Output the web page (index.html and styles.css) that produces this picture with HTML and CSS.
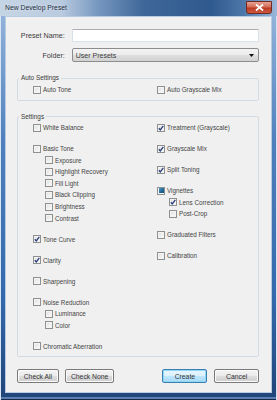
FILE: index.html
```html
<!DOCTYPE html>
<html lang="en">
<head>
  <meta charset="UTF-8" />
  <meta name="viewport" content="width=device-width, initial-scale=1.0" />
  <title>New Develop Preset</title>
  <link rel="stylesheet" href="styles.css">
</head>
<body>
  <div class="window">
    <!-- barra de titulo -->
    <div class="titlebar">
      <span class="title">New Develop Preset</span>
      <span class="close">
        <svg width="9" height="7" viewBox="0 0 9 7"><path d="M1 0.5 L8 6.5 M8 0.5 L1 6.5" stroke="#fff" stroke-width="1.8"/></svg>
      </span>
    </div>

    <div class="content">
      <div class="field-row">
        <label for="presetName">Preset Name:</label>
        <input type="text" id="presetName" />
      </div>
      <div class="field-row folder">
        <label>Folder:</label>
        <div class="select">
          <span>User Presets</span>
          <svg width="5" height="3" viewBox="0 0 5 3"><path d="M0 0 H5 L2.5 3 Z" fill="#111"/></svg>
        </div>
      </div>

      <fieldset class="group auto">
        <legend>Auto Settings</legend>
        <div class="cols">
          <div class="col">
            <div class="opt"><span class="box"></span>Auto Tone</div>
          </div>
          <div class="col">
            <div class="opt"><span class="box"></span>Auto Grayscale Mix</div>
          </div>
        </div>
      </fieldset>

      <fieldset class="group settings">
        <legend>Settings</legend>
        <div class="cols">
          <div class="col">
            <div class="opt"><span class="box"></span>White Balance</div>
            <div class="opt"><span class="box"></span>Basic Tone</div>
            <div class="opt sub"><span class="box"></span>Exposure</div>
            <div class="opt sub"><span class="box"></span>Highlight Recovery</div>
            <div class="opt sub"><span class="box"></span>Fill Light</div>
            <div class="opt sub"><span class="box"></span>Black Clipping</div>
            <div class="opt sub"><span class="box"></span>Brightness</div>
            <div class="opt sub"><span class="box"></span>Contrast</div>
            <div class="opt"><span class="box"><svg class="tick" viewBox="0 0 6 6"><path d="M0.8 3.2 L2.3 4.9 L5.3 0.8" fill="none" stroke="#2b3f7a" stroke-width="1.3"/></svg></span>Tone Curve</div>
            <div class="opt"><span class="box"><svg class="tick" viewBox="0 0 6 6"><path d="M0.8 3.2 L2.3 4.9 L5.3 0.8" fill="none" stroke="#2b3f7a" stroke-width="1.3"/></svg></span>Clarity</div>
            <div class="opt"><span class="box"></span>Sharpening</div>
            <div class="opt"><span class="box"></span>Noise Reduction</div>
            <div class="opt sub"><span class="box"></span>Luminance</div>
            <div class="opt sub"><span class="box"></span>Color</div>
            <div class="opt"><span class="box"></span>Chromatic Aberration</div>
          </div>
          <div class="col">
            <div class="opt"><span class="box"><svg class="tick" viewBox="0 0 6 6"><path d="M0.8 3.2 L2.3 4.9 L5.3 0.8" fill="none" stroke="#2b3f7a" stroke-width="1.3"/></svg></span>Treatment (Grayscale)</div>
            <div class="opt"><span class="box"><svg class="tick" viewBox="0 0 6 6"><path d="M0.8 3.2 L2.3 4.9 L5.3 0.8" fill="none" stroke="#2b3f7a" stroke-width="1.3"/></svg></span>Grayscale Mix</div>
            <div class="opt"><span class="box"><svg class="tick" viewBox="0 0 6 6"><path d="M0.8 3.2 L2.3 4.9 L5.3 0.8" fill="none" stroke="#2b3f7a" stroke-width="1.3"/></svg></span>Split Toning</div>
            <div class="opt"><span class="box mixed"></span>Vignettes</div>
            <div class="opt sub"><span class="box"><svg class="tick" viewBox="0 0 6 6"><path d="M0.8 3.2 L2.3 4.9 L5.3 0.8" fill="none" stroke="#2b3f7a" stroke-width="1.3"/></svg></span>Lens Correction</div>
            <div class="opt sub"><span class="box"></span>Post-Crop</div>
            <div class="opt"><span class="box"></span>Graduated Filters</div>
            <div class="opt"><span class="box"></span>Calibration</div>
          </div>
        </div>
      </fieldset>

      <div class="buttons">
        <button class="btn check-all">Check All</button>
        <button class="btn check-none">Check None</button>
        <button class="btn primary">Create</button>
        <button class="btn cancel">Cancel</button>
      </div>
    </div>
  </div>
</body>
</html>
```

FILE: styles.css
```css
* { box-sizing: border-box; margin: 0; padding: 0; }
body { width: 277px; height: 400px; overflow: hidden; font-family: "Liberation Sans", Arial, sans-serif; color: #3a3a3a; }

/* moldura da janela */
.window { width: 277px; height: 400px; display: flex; flex-direction: column; padding: 0 5px 7px 5px; background: linear-gradient(to bottom, #9ab8dc 0%, #4f80bd 35%, #3468ab 75%, #1f4478 100%); box-shadow: inset 1px 0 #d6e4f3, inset -1px 0 #d6e4f3, inset 0 -1px #13294c, inset 0 -3px #5a7fb0; }
.titlebar { height: 16px; margin: 0 -5px; padding: 0 5px; display: flex; justify-content: space-between; align-items: flex-start; background: linear-gradient(to right, #c6d5e5 0%, #b9cbdf 22%, #7495bf 36%, #3f6798 52%, #2f5a8f 76%, #4e77a9 88%, #9cb8da 100%); }
.title { font-size: 6.8px; color: #1c2b40; line-height: 16px; text-shadow: 0 0 3px rgba(255,255,255,0.7); }
.close { width: 26px; height: 13px; margin-top: 1px; border: 1px solid #6e2a22; border-radius: 0 0 3px 3px; background: linear-gradient(to bottom, #e6a393 0%, #d46a55 45%, #b93a24 55%, #cf5a3e 100%); display: flex; align-items: center; justify-content: center; }
.close svg { display: block; }

.content { flex: 1; background: #f0f0f0; border: 1px solid #b7cce4; padding: 12px 12px 0 11px; }

/* campos do topo */
.field-row { display: flex; align-items: center; }
.field-row label { width: 48px; text-align: right; margin-right: 7px; font-size: 7.2px; color: #3a3a3a; }
.field-row input { width: 188px; height: 13px; border: 1px solid #d9e1ea; border-top-color: #abadb3; border-radius: 1px; background: #fff; }
.folder { margin-top: 6px; }
.select { width: 188px; height: 14px; border: 1px solid #8d8d8d; border-radius: 2px; background: linear-gradient(to bottom, #f3f3f3 0%, #ececec 50%, #dedede 51%, #d2d2d2 100%); display: flex; align-items: center; justify-content: space-between; padding: 0 4px 0 3px; font-size: 7px; color: #3a3a3a; }
.select svg { display: block; }

/* grupos */
.group { border: 1px solid #d3dbe2; border-radius: 2px; padding: 0 0 0 15px; margin: 0; min-width: 0; }
.group legend { font-size: 6.4px; line-height: 8px; padding: 0 2px; margin-left: -14px; color: #3a3a3a; }
.auto { margin-top: 12px; padding-top: 2px; padding-bottom: 4px; }
.settings { margin-top: 12px; padding-top: 1.2px; padding-bottom: 3.5px; }
.cols { display: grid; grid-template-columns: 124px 1fr; }
.col { display: flex; flex-direction: column; }

.opt { height: 11.6px; display: flex; align-items: center; font-size: 6.3px; color: #444; white-space: nowrap; }
.opt + .opt:not(.sub) { margin-top: 9.4px; }
.opt.sub { padding-left: 12px; }
.box { width: 8px; height: 8px; margin-right: 2px; border: 1px solid #8f9090; background: linear-gradient(135deg, #d9dadb 0%, #eeeeee 50%, #fbfbfb 100%); box-shadow: inset 0 0 0 1px #f4f4f4; display: flex; align-items: center; justify-content: center; flex-shrink: 0; }
.tick { width: 6px; height: 6px; display: block; }
.box.mixed::after { content: ""; width: 5px; height: 5px; background: linear-gradient(135deg, #4a9ccc 0%, #1f6598 60%, #18507e 100%); }

/* botoes */
.buttons { display: flex; margin-top: 12.5px; }
.btn { height: 14px; border: 1px solid #7a7a7a; border-radius: 2px; background: linear-gradient(to bottom, #f3f3f3 0%, #ebebeb 50%, #dddddd 51%, #cfcfcf 100%); font-family: "Liberation Sans", Arial, sans-serif; font-size: 6.8px; color: #333; box-shadow: inset 0 0 0 1px #fbfbfb; }
.check-all { width: 42px; }
.check-none { width: 50px; margin-left: 6px; }
.primary { width: 45px; margin-left: 48px; border-color: #3c7fb1; background: linear-gradient(to bottom, #eaf6fd 0%, #d9f0fc 50%, #bee6fd 51%, #a7d9f5 100%); box-shadow: inset 0 0 0 1px #8fd8f5; }
.cancel { width: 45px; margin-left: 7px; }
```
